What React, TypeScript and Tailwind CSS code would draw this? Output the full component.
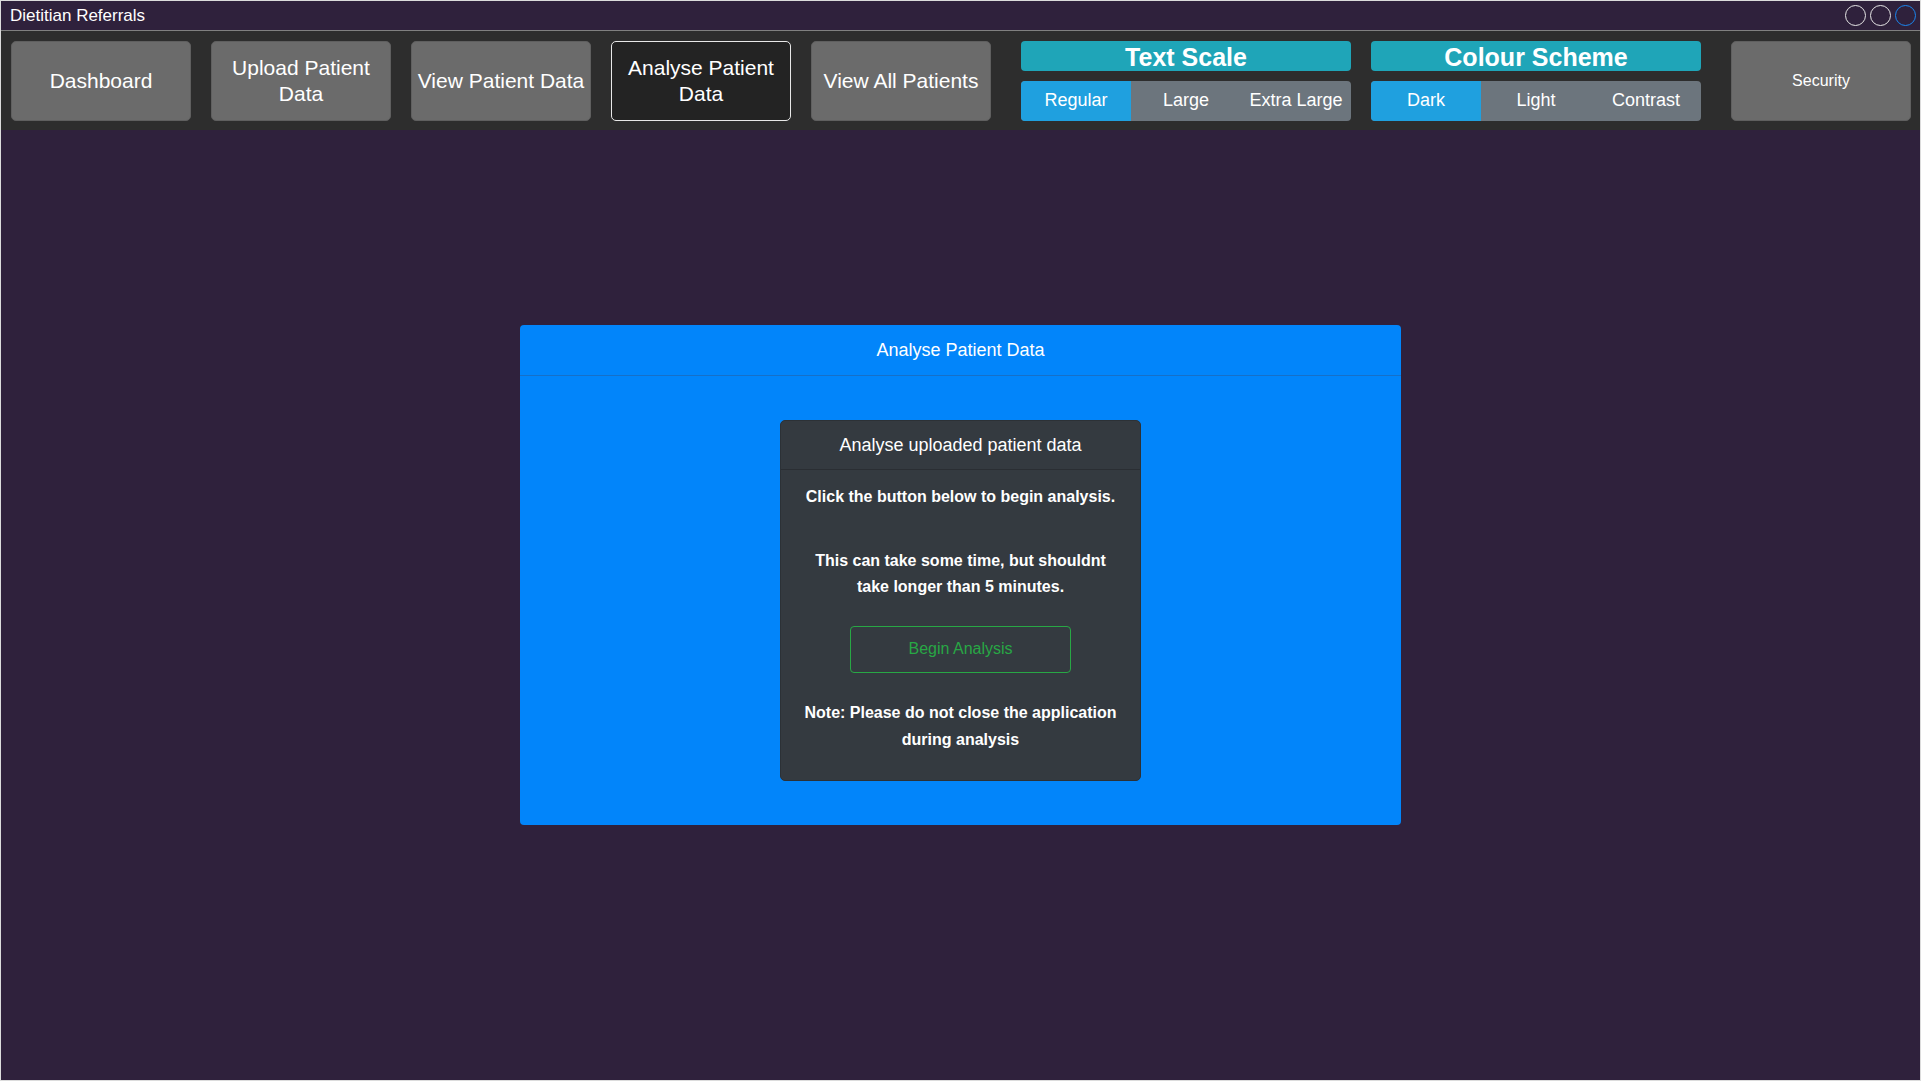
import React from "react";

const navButtons = [
  { label: "Dashboard", active: false },
  { label: "Upload Patient Data", active: false },
  { label: "View Patient Data", active: false },
  { label: "Analyse Patient Data", active: true },
  { label: "View All Patients", active: false },
];

function Segmented({ title, options }: { title: string; options: string[] }) {
  return (
    <div className="flex w-[330px] flex-col gap-[10px]">
      <div className="flex h-[30px] items-center justify-center rounded-[4px] bg-[#1fa5b8] pt-[2px] text-[25px] font-bold leading-none text-white">
        {title}
      </div>
      <div className="flex h-[40px] overflow-hidden rounded-[4px] bg-[#6c757d]">
        {options.map((o, i) => (
          <div
            key={o}
            className={
              i === 0
                ? "flex flex-1 items-center justify-center bg-[#1fa0df] pb-[2px] text-[18px] text-white"
                : "flex flex-1 items-center justify-center pb-[2px] text-[18px] text-white"
            }
          >
            {o}
          </div>
        ))}
      </div>
    </div>
  );
}

export default function App() {
  return (
    <div
      className="flex h-[1081px] w-[1921px] flex-col overflow-hidden border border-[#dcdcdc] bg-[#2f213c]"
      style={{ fontFamily: '"Liberation Sans", Arial, sans-serif' }}
    >
      {/* Title bar */}
      <div className="flex h-[30px] shrink-0 items-center justify-between border-b border-[#808080] bg-[#2f213c] pl-[9px] pr-[4px]">
        <span className="text-[17px] leading-none text-white">Dietitian Referrals</span>
        <div className="flex items-center gap-[4px]">
          <div className="h-[21px] w-[21px] rounded-full border-[1.5px] border-[#e6e6e6]" />
          <div className="h-[21px] w-[21px] rounded-full border-[1.5px] border-[#e6e6e6]" />
          <div className="h-[21px] w-[21px] rounded-full border-[1.5px] border-[#1a86f0]" />
        </div>
      </div>

      {/* Nav bar */}
      <div className="flex h-[99px] shrink-0 items-start bg-[#2d2d2d] pl-[10px] pt-[10px]">
        <div className="flex gap-[20px]">
          {navButtons.map((b) => (
            <div
              key={b.label}
              className={
                b.active
                  ? "flex h-[80px] w-[180px] items-center justify-center rounded-[5px] border border-[#e8e8e8] bg-[#232323] px-[2px] text-center text-[21px] leading-[26px] text-white"
                  : "flex h-[80px] w-[180px] items-center justify-center rounded-[5px] border border-[#5f5f5f] bg-[#6b6b6b] px-[2px] text-center text-[21px] leading-[26px] text-white"
              }
            >
              {b.label}
            </div>
          ))}
        </div>
        <div className="ml-[30px]">
          <Segmented title="Text Scale" options={["Regular", "Large", "Extra Large"]} />
        </div>
        <div className="ml-[20px]">
          <Segmented title="Colour Scheme" options={["Dark", "Light", "Contrast"]} />
        </div>
        <div className="ml-[30px] flex h-[80px] w-[180px] items-center justify-center rounded-[5px] border border-[#5f5f5f] bg-[#6b6b6b] text-[16px] text-white">
          Security
        </div>
      </div>

      {/* Main */}
      <div className="flex flex-1 flex-col items-center">
        <div className="mt-[195px] w-[881px] rounded-[4px] bg-[#0285fa]">
          <div className="flex h-[51px] items-center justify-center border-b border-[#1670c8] text-[18px] text-white">
            Analyse Patient Data
          </div>
          <div className="flex justify-center pb-[44px] pt-[44px]">
            <div className="w-[361px] rounded-[5px] border border-[#2c3136] bg-[#343a40]">
              <div className="flex h-[49px] items-center justify-center border-b border-[#2a2e33] text-[18px] text-white">
                Analyse uploaded patient data
              </div>
              <div className="flex flex-col items-center px-[20px] pb-[27px] pt-[14px] text-center text-[16px] font-bold leading-[26.67px] text-white">
                <p>Click the button below to begin analysis.</p>
                <p className="mt-[37px]">This can take some time, but shouldnt take longer than 5 minutes.</p>
                <div className="mt-[25px] flex h-[47px] w-[221px] items-center justify-center rounded-[4px] border border-[#28a745] text-[16px] font-normal text-[#28a745]">
                  Begin Analysis
                </div>
                <p className="mt-[27px]">Note: Please do not close the application during analysis</p>
              </div>
            </div>
          </div>
        </div>
      </div>
    </div>
  );
}
